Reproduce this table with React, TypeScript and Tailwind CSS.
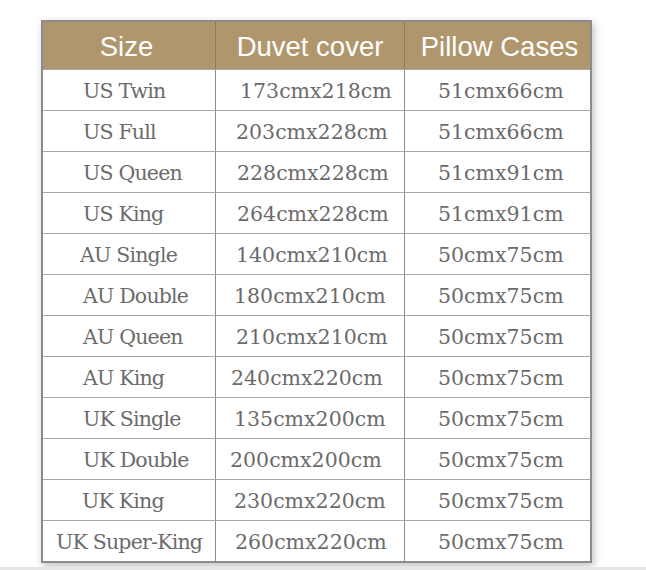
import React from "react";

const rows: [string, string, string, string, string][] = [
  ["US Twin", "173cmx218cm", "51cmx66cm", "pl-[40px]", "pl-[24px]"],
  ["US Full", "203cmx228cm", "51cmx66cm", "pl-[40px]", "pl-[20px]"],
  ["US Queen", "228cmx228cm", "51cmx91cm", "pl-[40px]", "pl-[21px]"],
  ["US King", "264cmx228cm", "51cmx91cm", "pl-[40px]", "pl-[21px]"],
  ["AU Single", "140cmx210cm", "50cmx75cm", "pl-[37px]", "pl-[20px]"],
  ["AU Double", "180cmx210cm", "50cmx75cm", "pl-[40px]", "pl-[18px]"],
  ["AU Queen", "210cmx210cm", "50cmx75cm", "pl-[40px]", "pl-[20px]"],
  ["AU King", "240cmx220cm", "50cmx75cm", "pl-[40px]", "pl-[15px]"],
  ["UK Single", "135cmx200cm", "50cmx75cm", "pl-[40px]", "pl-[18px]"],
  ["UK Double", "200cmx200cm", "50cmx75cm", "pl-[40px]", "pl-[14px]"],
  ["UK King", "230cmx220cm", "50cmx75cm", "pl-[39px]", "pl-[18px]"],
  ["UK Super-King", "260cmx220cm", "50cmx75cm", "pl-[13px]", "pl-[19px]"],
];

export default function App() {
  return (
    <div className="w-[646px] h-[570px] bg-white relative overflow-hidden">
      <div className="pl-[41px] pt-[20px]">
        <div className="w-[551px] border-2 border-[#8c8c8c] shadow-[2px_3px_8px_rgba(0,0,0,0.25)] bg-white">
          <div
            className="grid grid-cols-[173px_189px_1fr] h-[47px] bg-[#b0966d] text-white text-[27.5px] leading-none"
            style={{ fontFamily: '"Liberation Sans", Arial, sans-serif' }}
          >
            <div className="flex items-center justify-center border-r border-[#8a7a60] pr-[5px] pt-[2px]">Size</div>
            <div className="flex items-center justify-center border-r border-[#8a7a60] pt-[2px]">Duvet cover</div>
            <div className="flex items-center justify-center pl-[4px] pt-[2px]">Pillow Cases</div>
          </div>
          {rows.map((r, i) => (
            <div
              key={i}
              className="grid grid-cols-[173px_189px_1fr] h-[41px] border-t border-[#a8a8a8] text-[#6b6b6b] text-[20.5px] leading-none"
              style={{ fontFamily: '"DejaVu Serif", "Liberation Serif", serif' }}
            >
              <div className={`flex items-center justify-start border-r border-[#8c8c8c] pt-[2px] whitespace-nowrap tracking-[-0.8px] ${r[3]}`}>{r[0]}</div>
              <div className={`flex items-center justify-start border-r border-[#8c8c8c] pt-[2px] whitespace-nowrap ${r[4]}`}>{r[1]}</div>
              <div className="flex items-center justify-start pt-[2px] pl-[33px] whitespace-nowrap">{r[2]}</div>
            </div>
          ))}
        </div>
      </div>
      <div className="absolute left-0 right-0 bottom-0 h-[3px] bg-[#e6e6e6]" />
    </div>
  );
}
